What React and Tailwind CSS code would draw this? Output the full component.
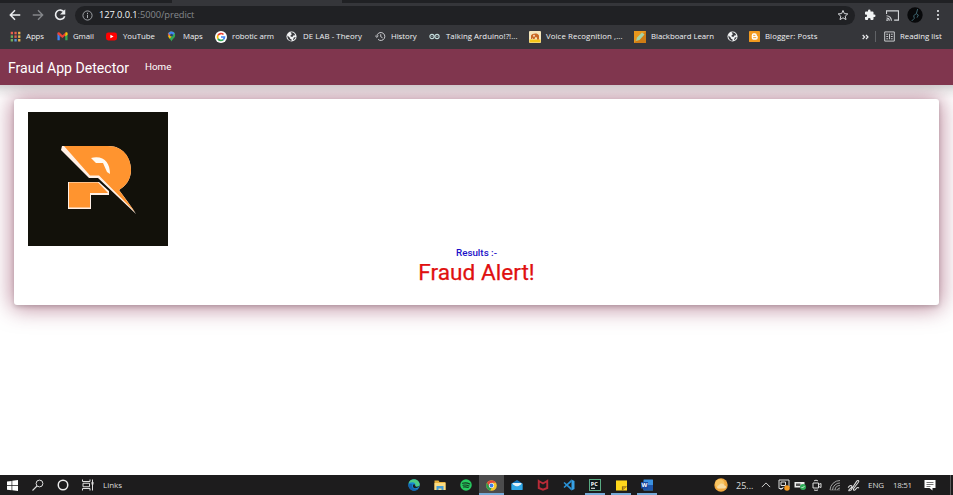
import React from "react";

const UI = "font-['Open_Sans','Noto_Sans',sans-serif]";

function Svg({ s = 11, w, h, vb = "0 0 24 24", children, className = "" }) {
  return (
    <svg width={w || s} height={h || s} viewBox={vb} className={`block shrink-0 ${className}`}>
      {children}
    </svg>
  );
}

const Globe = () => (
  <Svg s={11}>
    <circle cx="12" cy="12" r="11" fill="#f1f3f4" />
    <path d="M3 10l5 4 1 3 3 1v4C6 21 3 17 3 10zM10 3c5-1 9 2 10 6l-4 1-2 3-4-1 0-3 3-2zM17 14l4-1c-1 4-3 6-6 7z" fill="#3a3b3f" />
  </Svg>
);

const AppsIcon = () => (
  <Svg s={11} vb="0 0 11 11">
    {["#e8604c", "#e8604c", "#e8b04c", "#6fae5c", "#d86050", "#e8b04c", "#6fae5c", "#5c94d8", "#e8b04c"].map((c, i) => (
      <rect key={i} x={0.7 + (i % 3) * 3.7} y={0.8 + Math.floor(i / 3) * 3.6} width="2.3" height="2.5" fill={c} />
    ))}
  </Svg>
);

const Gmail = () => (
  <Svg s={11}>
    <path d="M1 5v15h5V10z" fill="#4285f4" />
    <path d="M23 5v15h-5V10z" fill="#34a853" />
    <path d="M1 5c0-2 3-3 5-1l6 5 6-5v6l-6 5-11-8z" fill="#ea4335" />
    <path d="M18 4c2-2 5-1 5 1v3l-5 4z" fill="#fbbc04" />
  </Svg>
);

const YouTube = () => (
  <Svg s={11}>
    <rect x="0" y="3.5" width="24" height="17" rx="5" fill="#f00" />
    <path d="M9.5 8v8l7-4z" fill="#fff" />
  </Svg>
);

const Maps = () => (
  <Svg s={11}>
    <path d="M12 1a8 8 0 0 0-8 8c0 6 6 7 8 14 2-7 8-8 8-14a8 8 0 0 0-8-8z" fill="#34a853" />
    <path d="M5 5a8 8 0 0 1 7-4v7l-5 6C5 12 3 9 5 5z" fill="#ea5b3c" />
    <path d="M12 1a8 8 0 0 1 7 4l-8 8-6-8c2-3 4-4 7-4z" fill="#4285f4" />
    <path d="M5 12l6-6 2 5-5 6z" fill="#fbbc04" />
    <circle cx="12" cy="9" r="3" fill="#28436c" />
  </Svg>
);

const Google = () => (
  <Svg s={12}>
    <circle cx="12" cy="12" r="12" fill="#fff" />
    <g fill="none" strokeWidth="3.4">
      <path d="M6 8.7A7 7 0 0 1 17 7" stroke="#ea4335" />
      <path d="M6 8.5a7 7 0 0 0 0 7" stroke="#fbbc04" />
      <path d="M6 15.5A7 7 0 0 0 16.5 17.3" stroke="#34a853" />
      <path d="M16.5 17.3A7 7 0 0 0 19 12h-7" stroke="#4285f4" />
    </g>
  </Svg>
);

const HistoryIcon = () => (
  <Svg s={11}>
    <path d="M4 12a8.7 8.7 0 1 1 2.6 6.2M0.5 10.5L4 14l3.5-3.5M12.5 7v5.5l4 2.3" fill="none" stroke="#d5d7da" strokeWidth="2" />
  </Svg>
);

const Arduino = () => (
  <Svg s={11}>
    <circle cx="6.500" cy="12" r="4.600" fill="none" stroke="#c3dcdc" strokeWidth="2.400" />
    <circle cx="17.500" cy="12" r="4.600" fill="none" stroke="#c3dcdc" strokeWidth="2.400" />
    <path d="M5 12h3M16 12h3" stroke="#c3dcdc" strokeWidth="1.200" />
  </Svg>
);

const Voice = () => (
  <Svg s={12}>
    <rect width="24" height="24" rx="2" fill="#f4e6bd" />
    <path d="M1 17h22v6H1z" fill="#f5c518" />
    <path d="M4 16V9c2-5 14-6 16 0v8h-4v-4l-3-1-2 4H8v-3l-2 3z" fill="#c96a26" />
    <circle cx="10" cy="9.500" r="2" fill="#f8dcc0" />
  </Svg>
);

const Blackboard = () => (
  <Svg s={12}>
    <rect width="24" height="24" fill="#e8971c" />
    <path d="M0 24L24 0v24z" fill="#cf7c14" />
    <path d="M4 20l2-7L16 3l5 4L11 18z" fill="#a4d3a6" />
  </Svg>
);

const Blogger = () => (
  <Svg s={11}>
    <rect width="24" height="24" rx="1" fill="#f29a1f" />
    <path d="M6 9a4 4 0 0 1 4-4h3a4 4 0 0 1 4 4c0 2 2 1 2 3v3a4 4 0 0 1-4 4h-5a4 4 0 0 1-4-4z" fill="#fff" />
    <path d="M10 9.500h3M10 14.500h5" stroke="#f29a1f" strokeWidth="2" strokeLinecap="round" />
  </Svg>
);

const bookmarks = [
  { icon: <AppsIcon />, t: "Apps", c: "w-[47px]", tx: "w-[16px]" },
  { icon: <Gmail />, t: "Gmail", c: "w-[49px]", tx: "w-[16px]" },
  { icon: <YouTube />, t: "YouTube", c: "w-[60px]", tx: "w-[17px]" },
  { icon: <Maps />, t: "Maps", c: "w-[49px]", tx: "w-[17px]" },
  { icon: <Google />, t: "robotic arm", c: "w-[71px]", tx: "w-[17px]" },
  { icon: <Globe />, t: "DE LAB - Theory", c: "w-[89px]", tx: "w-[17px]", ls: "tracking-[0.08px]" },
  { icon: <HistoryIcon />, t: "History", c: "w-[54px]", tx: "w-[16px]" },
  { icon: <Arduino />, t: "Talking Arduino!?!...", c: "w-[100px]", tx: "w-[17px]", ls: "tracking-[0.05px]" },
  { icon: <Voice />, t: "Voice Recognition ,...", c: "w-[105px]", tx: "w-[17px]", ls: "tracking-[0.1px]" },
  { icon: <Blackboard />, t: "Blackboard Learn", c: "w-[93px]", tx: "w-[17px]" },
  { icon: <Globe />, t: "", c: "w-[22px]", tx: "w-[17px]" },
  { icon: <Blogger />, t: "Blogger: Posts", c: "w-[113px]", tx: "w-[16px]", ls: "tracking-[0.08px]" },
];

function Browser() {
  return (
    <header className={`${UI} bg-[#35363a]`}>
      <div className="flex h-[3px] bg-[#202124]">
        <div className="ml-[172px] h-[3px] w-[170px] bg-[#35363a]" />
      </div>
      <div className="flex h-[24px] items-center">
        <Svg s={14} className="ml-[8px]">
          <path d="M21 12H4M12 4l-8 8 8 8" fill="none" stroke="#eceef0" strokeWidth="2.600" />
        </Svg>
        <Svg s={14} className="ml-[9px]">
          <path d="M3 12h17M12 4l8 8-8 8" fill="none" stroke="#85878b" strokeWidth="2.300" />
        </Svg>
        <Svg s={14} className="ml-[8px]">
          <path d="M19 7a8 8 0 1 0 1 7" fill="none" stroke="#eceef0" strokeWidth="2.800" />
          <path d="M21 2v9h-9z" fill="#eceef0" />
        </Svg>
        <div className="ml-[8px] flex h-[19px] w-[780px] items-center rounded-full bg-[#202124] pr-[6px] pl-[7px]">
          <Svg s={11}>
            <circle cx="12" cy="12" r="10" fill="none" stroke="#a9acb0" strokeWidth="2" />
            <path d="M12 10.500v7M12 6v2.600" stroke="#a9acb0" strokeWidth="2.200" />
          </Svg>
          <span className="ml-[6px] text-[9.3px] leading-none tracking-[-0.07px] whitespace-nowrap text-[#85888c]">
            <span className="font-medium text-[#f4f5f6]">127.0.0.1</span>:5000/predict
          </span>
          <Svg s={12} className="ml-auto">
            <path d="M12 2.800l2.700 6.400 6.900.6-5.200 4.600 1.600 6.800-6-3.600-6 3.600 1.600-6.800-5.200-4.600 6.900-.6z" fill="none" stroke="#d4d6d9" strokeWidth="2" />
          </Svg>
        </div>
        <Svg s={12} className="ml-[9px]">
          <path d="M20.500 11H19V7a2 2 0 0 0-2-2h-4V3.500a2.500 2.500 0 0 0-5 0V5H4a2 2 0 0 0-2 2v3.800h1.500a2.700 2.700 0 0 1 0 5.400H2V20a2 2 0 0 0 2 2h3.800v-1.500a2.700 2.700 0 0 1 5.400 0V22H17a2 2 0 0 0 2-2v-4h1.500a2.500 2.500 0 0 0 0-5z" fill="#f1f3f4" />
        </Svg>
        <Svg s={13} className="ml-[10px]">
          <path d="M1 9V3.500h22v17h-8" fill="none" stroke="#d4d6d9" strokeWidth="2" />
          <path d="M1 12.500a9 9 0 0 1 9 9M1 16.500a5 5 0 0 1 5 5" fill="none" stroke="#d4d6d9" strokeWidth="2" />
          <circle cx="2" cy="20.500" r="1.600" fill="#d4d6d9" />
        </Svg>
        <Svg s={16} className="ml-[8px]">
          <circle cx="12" cy="12" r="11.500" fill="#08090b" />
          <path d="M16 3l-2 7-4 3 1 4-4 4M14 10l3 2-2 4" fill="none" stroke="#45727e" strokeWidth="1.300" />
        </Svg>
        <Svg s={12} className="ml-[9px]">
          <circle cx="12" cy="4" r="2.100" fill="#e8eaed" />
          <circle cx="12" cy="12" r="2.100" fill="#e8eaed" />
          <circle cx="12" cy="20" r="2.100" fill="#e8eaed" />
        </Svg>
      </div>
      <div className="flex h-[22px] items-center pb-[3px] pl-[10px] text-[7.8px] leading-none font-medium whitespace-nowrap text-[#f0f1f3]">
        {bookmarks.map((b, i) => (
          <div key={i} className={`flex shrink-0 items-center ${b.c}`}>
            <span className={`shrink-0 ${b.tx}`}>{b.icon}</span>
            <span className={b.ls || "tracking-[-0.05px]"}>{b.t}</span>
          </div>
        ))}
        <Svg s={8} className="mt-[1px]">
          <path d="M2 6l6 6-6 6M12 6l6 6-6 6" fill="none" stroke="#eceef0" strokeWidth="3.500" />
        </Svg>
        <div className="ml-[5px] h-[11px] w-px bg-[#606266]" />
        <Svg s={11} className="ml-[8px]">
          <path d="M1.500 2h21v20h-21zM12 6v12M15 7h4M15 12h4M15 17h4M5 7h4M5 12h4M5 17h4" fill="none" stroke="#d4d6d9" strokeWidth="2" />
        </Svg>
        <span className="ml-[5px]">Reading list</span>
      </div>
    </header>
  );
}

function Logo() {
  return (
    <Svg w={140} h={134} vb="0 0 140 134">
      <rect width="140" height="134" fill="#12110a" />
      <path d="M34 34L81 34C94 34 103 45 103 58C103 67 98 74 91 78C97 86 103 94 108 102L70 66L61 66L33 38Z" fill="#fff0e6" />
      <path d="M36 34H80C95 34 103 45 103 58C103 67 98 74 91 78L107 100L71 63.500H62Z" fill="#ff942f" />
      <path d="M63 46C76 43 82 51 82 62L79 60L75 51L68 51Z" fill="#fffaf2" />
      <path d="M40 70H71L81 79V83H63V97H40Z" fill="#fff0e6" />
      <path d="M41 70.500H70L80 81H62V95.500H41Z" fill="#ff942f" />
    </Svg>
  );
}

const Cell = ({ w = "w-[26px]", active, open, children }) => (
  <div className={`flex h-full shrink-0 flex-col items-center ${w} ${active ? "bg-[#4c4c4d]" : ""}`}>
    <div className="flex flex-1 items-center">{children}</div>
    <div className={`-mt-[2px] h-[2px] ${active ? "w-full" : "w-[20px]"} ${active || open ? "bg-[#76a9d6]" : ""}`} />
  </div>
);

function Taskbar() {
  return (
    <footer className={`${UI} mt-auto flex h-[20px] items-center bg-[#1d1c1d] text-[8px] leading-none text-[#dcdcdc]`}>
      <Cell w="w-[25px]">
        <Svg s={11}>
          <path d="M0 3.500l10-1.500v9.500H0zM11.500 1.800L24 0v11.500H11.500zM0 13h10v9.500L0 21zM11.500 13H24v11l-12.500-1.800z" fill="#fff" />
        </Svg>
      </Cell>
      <Cell w="w-[25px]">
        <Svg s={12}>
          <circle cx="15" cy="9" r="6.800" fill="none" stroke="#dcdcdc" strokeWidth="2" />
          <path d="M10 14l-9 9" stroke="#dcdcdc" strokeWidth="2.200" />
        </Svg>
      </Cell>
      <Cell w="w-[25px]">
        <Svg s={12}>
          <circle cx="12" cy="12" r="9.500" fill="none" stroke="#ececec" strokeWidth="3" />
        </Svg>
      </Cell>
      <Cell w="w-[26px]">
        <Svg s={12}>
          <path d="M1 1v4h15V1M1 23v-4h15v4M2 8.500h13v7H2zM21 1v22" fill="none" stroke="#dedede" strokeWidth="2" />
          <path d="M19 6h4v5h-4z" fill="#dedede" />
        </Svg>
      </Cell>
      <span className="ml-[2px] w-[298px]">Links</span>
      <Cell>
        <Svg s={12}>
          <circle cx="12" cy="12" r="11.500" fill="#1689d2" />
          <path d="M1 9C3-2 21-3 23.500 10c0 5-5 7-9 5 3-8-6-11-13.500-6z" fill="#4ccb85" />
          <path d="M9 11c-3 6 3 12 12 8-5 7-17 6-20-5 1-5 5-6 8-3z" fill="#1461ad" />
          <path d="M10 12c1-2 4-2 4 1 0 2 4 4 8 1-1 4-9 7-12 2z" fill="#1d1c1d" />
        </Svg>
      </Cell>
      <Cell>
        <Svg s={12}>
          <path d="M1 3h8l2 3h12v16H1z" fill="#e9b33d" />
          <path d="M1 8h22v14H1z" fill="#fbdc83" />
          <path d="M5 22v-8h14v8h-4v-3H9v3z" fill="#459ed5" />
        </Svg>
      </Cell>
      <Cell>
        <Svg s={12}>
          <circle cx="12" cy="12" r="11.500" fill="#28cb60" />
          <path d="M5 8.500c5-1.500 10-1 14.500 1.500M6 12.500c4-1 8-.5 12 1.500M7 16c4-1 6-.5 9.500 1" fill="none" stroke="#153c22" strokeWidth="2.300" strokeLinecap="round" />
        </Svg>
      </Cell>
      <Cell w="w-[25px]" active>
        <Svg s={11}>
          <circle cx="12" cy="12" r="11.500" fill="#f5c52c" />
          <path d="M2 6.200A11.500 11.500 0 0 1 22 6.200H12L7 15z" fill="#e3493b" />
          <path d="M2 6.200L8 16l4 2-3 5.200A11.500 11.500 0 0 1 2 6.200z" fill="#2d9d50" />
          <circle cx="12" cy="12" r="5.500" fill="#fff" />
          <circle cx="12" cy="12" r="4.200" fill="#3e7de8" />
        </Svg>
      </Cell>
      <Cell>
        <Svg s={12}>
          <path d="M1 9l11-7 11 7v12H1z" fill="#1478bf" />
          <path d="M3 8h18v7H3z" fill="#e6f4fb" />
          <path d="M1 9l11 7 11-7v13H1z" fill="#30a8e7" />
        </Svg>
      </Cell>
      <Cell>
        <Svg s={12}>
          <path d="M3.500 4l8.500 5 8.500-5v14l-8.500 3.500-8.500-3.500z" fill="none" stroke="#b92b38" strokeWidth="3.800" />
        </Svg>
      </Cell>
      <Cell>
        <Svg s={12}>
          <path d="M17 1v5L3 18l-2-2z" fill="#2b93d8" />
          <path d="M17 23v-5L3 6L1 8z" fill="#2b93d8" />
          <path d="M17 1l6 3v16l-6 3z" fill="#36a1e6" />
        </Svg>
      </Cell>
      <Cell open>
        <Svg s={12}>
          <rect x="1" y="1" width="22" height="22" fill="#11181a" stroke="#59aa82" strokeWidth="2" />
          <text x="3.500" y="13" fontSize="11" fontWeight="700" fontFamily="Open Sans" fill="#fff">PC</text>
          <path d="M4 18.500h8" stroke="#fff" strokeWidth="2" />
        </Svg>
      </Cell>
      <Cell open>
        <Svg s={11}>
          <path d="M0 1h24v22H0z" fill="#ffd71c" />
          <path d="M13 23v-9h11z" fill="#463c1c" />
          <path d="M14 14h10l-10 9z" fill="#c49517" />
        </Svg>
      </Cell>
      <Cell w="w-[25px]" open>
        <Svg s={12}>
          <rect x="5" y="1" width="19" height="22" rx="1" fill="#3b91e1" />
          <path d="M5 12h19v10H5z" fill="#1d55aa" />
          <rect x="0" y="6" width="14" height="13" fill="#1848a0" />
          <text x="1" y="16.500" fontSize="12" fontWeight="700" fontFamily="Open Sans" fill="#fff">W</text>
        </Svg>
      </Cell>
      <div className="ml-auto flex h-full items-center">
        <Svg s={14}>
          <circle cx="12" cy="12" r="11.500" fill="#f1a83e" />
          <circle cx="10" cy="10" r="8" fill="#f8c563" />
          <path d="M6 18a4 4 0 0 1 3-6c2-4 8-3 9 1 4 0 3 5 0 5z" fill="#f7dba2" />
        </Svg>
        <span className="ml-[8px] w-[20px] text-[9px]">25...</span>
        <Cell w="w-[20px]"><Svg s={10}><path d="M2 17L12 7l10 10" fill="none" stroke="#e0e0e0" strokeWidth="2.200" /></Svg></Cell>
        <Cell w="w-[15px]">
          <Svg s={12}>
            <path d="M2 2h20v14M2 2v17h8M6 6h9v7H6zM5 22l6-6" fill="none" stroke="#dedede" strokeWidth="2" />
            <circle cx="18" cy="18" r="5.500" fill="#f59b24" />
          </Svg>
        </Cell>
        <Cell w="w-[17px]">
          <Svg s={12}>
            <path d="M1 6h20v11H1z" fill="#eee" /><path d="M4 9h9v5H4z" fill="#555" />
            <circle cx="18" cy="16" r="6" fill="#2fae58" /><path d="M15 16l2 2 4-4" fill="none" stroke="#fff" strokeWidth="1.500" />
          </Svg>
        </Cell>
        <Cell w="w-[18px]">
          <Svg s={12}><path d="M4 8h11v10H4zM15 11l5-2v8l-5-2M6 4c2-2 6-2 8 0M6 22c2 1 6 1 8 0" fill="none" stroke="#dedede" strokeWidth="2" /></Svg>
        </Cell>
        <Cell w="w-[18px]">
          <Svg s={12}><path d="M2 22A20 20 0 0 1 22 3M7 22A15 15 0 0 1 22 8M12 22a10 10 0 0 1 10-9M17 22a5 5 0 0 1 5-4" fill="none" stroke="#b5b5b5" strokeWidth="1.700" /><path d="M2 22h20" stroke="#aaa" /></Svg>
        </Cell>
        <Cell w="w-[18px]">
          <Svg s={13}><path d="M2 16c5-7 10-3 5 1s-5 6 0 4L18 4c3-3 5 0 3 2l-9 12c-1 3 2 4 4 1 3-4 5-4 6-2" fill="none" stroke="#dedede" strokeWidth="1.900" /></Svg>
        </Cell>
        <span className="ml-[6px] w-[25px] tracking-[-0.05px] whitespace-nowrap">ENG</span>
        <span className="w-[31px] tracking-[-0.3px] whitespace-nowrap">18:51</span>
        <Svg s={12}>
          <path d="M1 2h22v16h-6v5l-6-5H1z" fill="#fff" />
          <path d="M5 7h14M5 11h14M5 15h8" stroke="#454545" strokeWidth="1.500" />
        </Svg>
        <div className="mr-[2px] ml-[14px] h-full w-px bg-[#5a5a5a]" />
      </div>
    </footer>
  );
}

export default function App() {
  return (
    <div className="flex h-[495px] w-[953px] flex-col overflow-hidden bg-white font-['Roboto',sans-serif]">
      <Browser />
      <nav className="flex h-[36px] items-center bg-[#80364e] pl-[8px] text-white">
        <span className="w-[137px] pt-[2px] text-[14.1px] leading-none whitespace-nowrap">Fraud App Detector</span>
        <span className="text-[9.8px] leading-none">Home</span>
      </nav>
      <main className="flex flex-1 flex-col overflow-hidden bg-white bg-[linear-gradient(rgba(0,0,0,0.17),rgba(0,0,0,0.06)_7px,transparent_14px)] px-[14px] pt-[14px]">
        <section className="h-[206px] rounded-[3px] bg-white px-[14px] pt-[13px] text-center shadow-[0_2px_4px_rgba(0,0,0,0.16),0_1px_22px_2px_rgba(140,50,84,0.6)]">
          <Logo />
          <p className="mt-px text-[9.8px] leading-[11px] font-medium text-[#1b10c8]">Results :-</p>
          <h1 className="mt-[2px] text-[22.6px] leading-[26px] tracking-[0.02px] text-[#e01010] [-webkit-text-stroke:0.25px_#e01010]">Fraud Alert!</h1>
        </section>
      </main>
      <Taskbar />
    </div>
  );
}
